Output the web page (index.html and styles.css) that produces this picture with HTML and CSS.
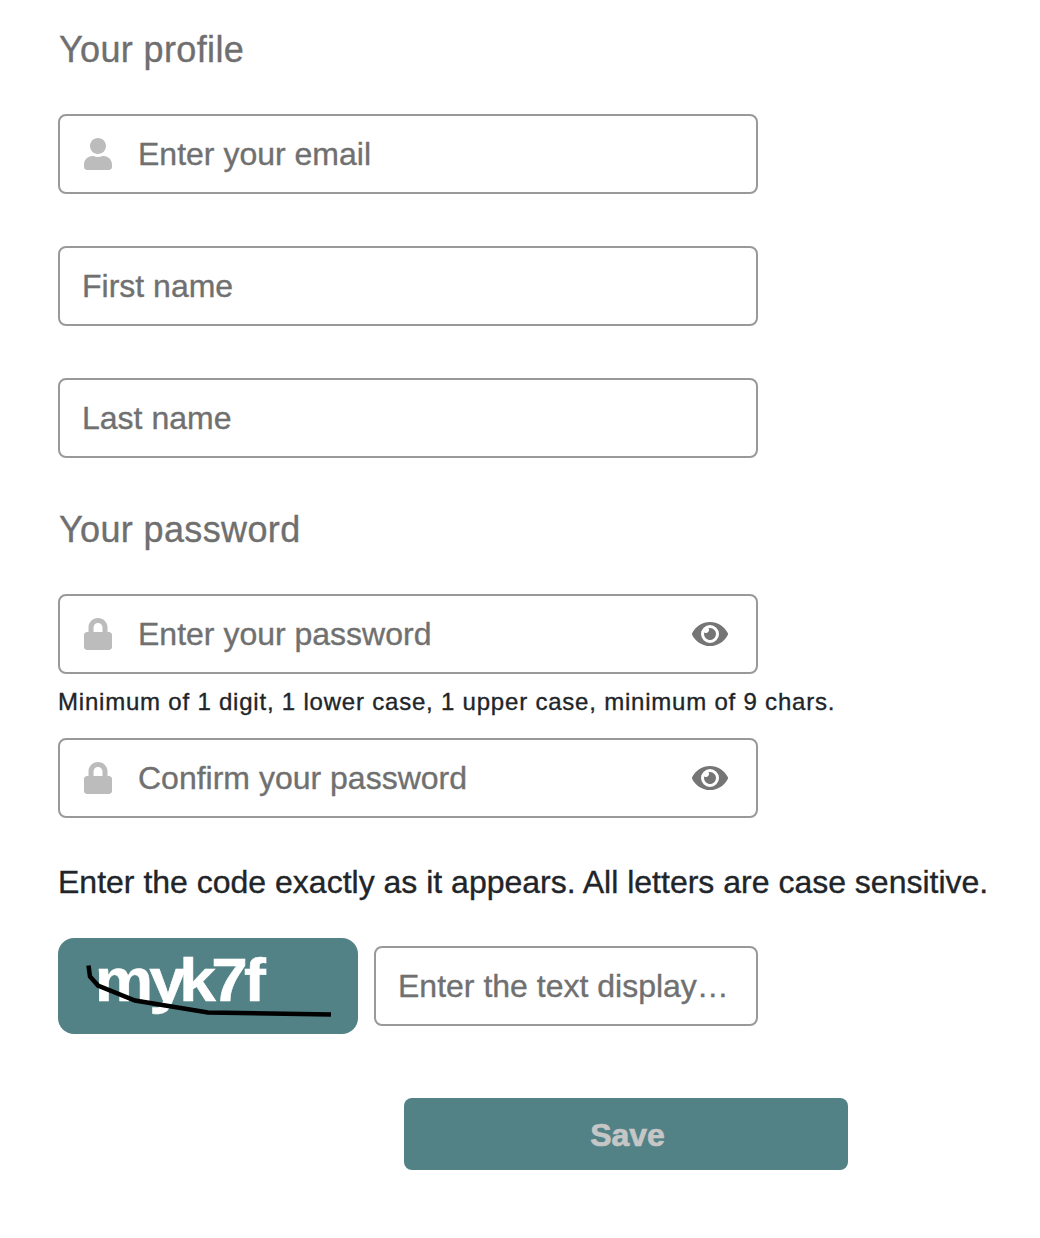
FILE: index.html
```
<!DOCTYPE html>
<html lang="en">
<head>
<meta charset="utf-8">
<title>Your profile</title>
<link rel="stylesheet" href="styles.css">
</head>
<body>
<svg width="0" height="0" class="sprites" aria-hidden="true">
  <symbol id="lock" viewBox="0 0 448 512"><path d="M400 224h-24v-72C376 68.200 307.800 0 224 0S72 68.200 72 152v72H48c-26.500 0-48 21.500-48 48v192c0 26.500 21.500 48 48 48h352c26.500 0 48-21.500 48-48V272c0-26.500-21.500-48-48-48zm-104 0H152v-72c0-39.700 32.300-72 72-72s72 32.300 72 72v72z"/></symbol>
  <symbol id="user" viewBox="0 0 448 512"><path d="M224 256c70.700 0 128-57.300 128-128S294.700 0 224 0 96 57.300 96 128s57.300 128 128 128zm89.600 32h-16.700c-22.200 10.200-46.900 16-72.900 16s-50.600-5.800-72.900-16h-16.700C60.200 288 0 348.200 0 422.400V464c0 26.500 21.500 48 48 48h352c26.500 0 48-21.500 48-48v-41.600c0-74.200-60.200-134.400-134.400-134.400z"/></symbol>
  <symbol id="eye" viewBox="0 64 576 384"><path d="M572.520 241.400C518.290 135.590 410.930 64 288 64S57.680 135.640 3.480 241.410a32.350 32.350 0 0 0 0 29.190C57.710 376.410 165.070 448 288 448s230.320-71.640 284.520-177.410a32.350 32.350 0 0 0 0-29.190zM288 400a144 144 0 1 1 144-144 143.930 143.930 0 0 1-144 144zm0-240a95.310 95.310 0 0 0-25.310 3.790 47.850 47.850 0 0 1-66.900 66.900A95.780 95.780 0 1 0 288 160z"/></symbol>
</svg>
<form class="form">
  <h2 class="heading">Your profile</h2>
  <label class="field">
    <svg class="icon"><use href="#user"/></svg>
    <input class="input" type="text" placeholder="Enter your email">
  </label>
  <label class="field"><input class="input" type="text" placeholder="First name"></label>
  <label class="field"><input class="input" type="text" placeholder="Last name"></label>
  <h2 class="heading">Your password</h2>
  <label class="field field-password">
    <svg class="icon"><use href="#lock"/></svg>
    <input class="input" type="text" placeholder="Enter your password">
    <svg class="eye"><use href="#eye"/></svg>
  </label>
  <p class="hint">Minimum of 1 digit, 1 lower case, 1 upper case, minimum of 9 chars.</p>
  <label class="field field-confirm">
    <svg class="icon"><use href="#lock"/></svg>
    <input class="input" type="text" placeholder="Confirm your password">
    <svg class="eye"><use href="#eye"/></svg>
  </label>
  <p class="instructions">Enter the code exactly as it appears. All letters are case sensitive.</p>
  <div class="captcha">
    <svg class="captcha-code" viewBox="0 0 300 96">
      <text class="captcha-letters" transform="scale(1.06 1)" x="34.800 86 114.500 144.500 175.500" y="62.800">myk7f</text>
      <path class="scribble" d="M30.500 27.500 32 38.500 40 47.500 77 62.500 150 74.500 273 76.500"/>
    </svg>
    <label class="field field-captcha"><input class="input" type="text" placeholder="Enter the text display…"></label>
  </div>
  <button class="save" type="button">Save</button>
</form>
</body>
</html>
```
FILE: styles.css
```
* { box-sizing: border-box; }
body {
  margin: 0;
  background: #fff;
  color: #212529;
  font-family: "Liberation Sans", Arial, sans-serif;
  -webkit-text-stroke: .35px;
}
.sprites { display: block; }
.form {
  display: flex;
  flex-direction: column;
  align-items: flex-start;
  padding: 28px 40px 0 58px;
}
.heading {
  margin: 0 0 42px;
  padding-left: 1px;
  font-size: 36px;
  line-height: 44px;
  font-weight: 400;
  letter-spacing: .37px;
  color: #6f6f6f;
}
.field {
  display: flex;
  align-items: center;
  width: 700px;
  height: 80px;
  margin-bottom: 52px;
  padding: 0 28px 0 22px;
  border: 2px solid #999;
  border-radius: 8px;
}
.field + .heading { margin-top: -2px; }
.icon {
  flex: none;
  width: 28px;
  height: 32px;
  margin: 0 26px 0 2px;
  fill: #bcbcbc;
  stroke: none;
}
.eye {
  flex: none;
  width: 36px;
  height: 24px;
  fill: #757575;
}
.input {
  flex: 1;
  min-width: 0;
  height: 44px;
  padding: 0;
  border: 0;
  outline: 0;
  background: none;
  font: 32px/44px "Liberation Sans", Arial, sans-serif;
}
.input::placeholder { color: #707070; opacity: 1; }
.field-password { margin-bottom: 12px; }
.hint {
  margin: 0 0 20px;
  font-size: 24px;
  line-height: 32px;
  letter-spacing: .79px;
  white-space: nowrap;
}
.field-confirm { margin-bottom: 40px; }
.instructions {
  margin: 0 0 32px;
  font-size: 32px;
  line-height: 48px;
  white-space: nowrap;
}
.captcha { display: flex; align-items: center; gap: 16px; }
.captcha-code {
  width: 300px;
  height: 96px;
  border-radius: 16px;
  background: #528285;
}
.captcha-letters {
  fill: #fff;
  stroke: #fff;
  stroke-width: .6;
  font-size: 62px;
  font-weight: 700;
}
.scribble { fill: none; stroke: #000; stroke-width: 4.500; }
.field-captcha { width: 384px; margin: 0; padding: 0 22px; }
.save {
  width: 444px;
  height: 72px;
  margin: 64px 0 0 346px;
  padding: 2px 0 0 3px;
  border: 0;
  border-radius: 8px;
  background: #528285;
  color: #c6c6c6;
  font: 700 32px/44px "Liberation Sans", Arial, sans-serif;
  -webkit-text-stroke: .7px;
}
```
